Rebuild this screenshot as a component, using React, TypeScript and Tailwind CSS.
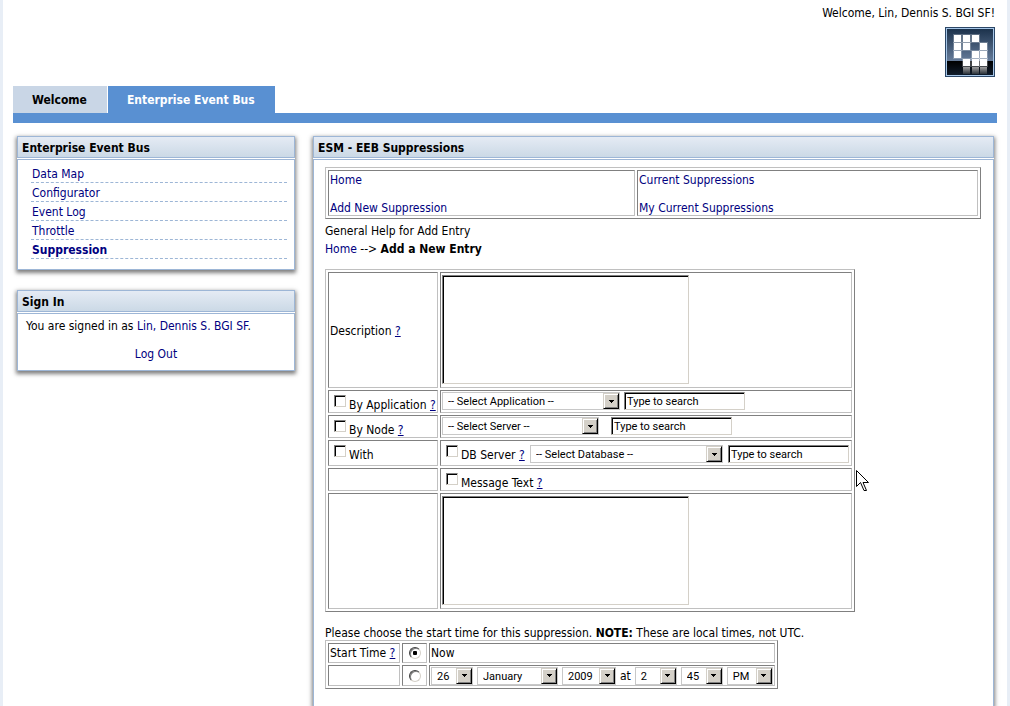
import type { ReactNode } from "react";

const SUNKEN =
  "border border-t-[#808080] border-l-[#808080] border-r-[#d4d0c8] border-b-[#d4d0c8] bg-white shadow-[inset_1px_1px_0_#000] outline-none";
const LINK = "text-[#000080]";
const TABLE =
  "border-separate border-spacing-[2px] border border-t-[#c0c0c0] border-l-[#c0c0c0] border-r-[#808080] border-b-[#808080]";
const EDGE = "border border-t-[#808080] border-l-[#808080] border-r-[#c0c0c0] border-b-[#c0c0c0]";
const CELL = `${EDGE} p-px`;
const TEXT_CELL = `${EDGE} px-px pt-0.5 pb-0`;

const SIDE_LINKS = ["Data Map", "Configurator", "Event Log", "Throttle", "Suppression"];
const MONTHS = [
  "January", "February", "March", "April", "May", "June",
  "July", "August", "September", "October", "November", "December",
];

function Panel({ title, className = "", bodyClass = "", children }: {
  title: string;
  className?: string;
  bodyClass?: string;
  children: ReactNode;
}) {
  return (
    <section className={`flex flex-col bg-white shadow-[0_2px_4px_1px_rgba(0,0,0,0.5)] ${className}`}>
      <h2 className="mb-px flex h-[22px] items-center border border-[#9db6d6] bg-linear-to-b from-[#e5ebf4] to-[#cbd9e6] px-1 pt-0.5 text-[12px] font-bold text-black">
        {title}
      </h2>
      <div className={`border border-[#9db6d6] ${bodyClass}`}>{children}</div>
    </section>
  );
}

function Select({ label, options, value, width }: {
  label: string;
  options: string[];
  value?: string;
  width: string;
}) {
  return (
    <span className={`relative inline-block h-[18px] shrink-0 ${width}`}>
      <select
        aria-label={label}
        defaultValue={value ?? options[0]}
        className="block h-full w-full appearance-none border border-[#c8c8c8] bg-white pt-px pl-[5px] font-[Roboto,sans-serif] text-[11px] leading-[15px] text-black outline-none"
      >
        {options.map((o) => (
          <option key={o}>{o}</option>
        ))}
      </select>
      <span className="pointer-events-none absolute inset-y-px right-px flex w-4 items-center justify-center border border-t-[#d4d0c8] border-l-[#d4d0c8] border-r-black border-b-black bg-[#d4d0c8] shadow-[inset_1px_1px_0_#fff,inset_-1px_-1px_0_#808080]">
        <svg width="5" height="3" viewBox="0 0 5 3" shapeRendering="crispEdges" aria-hidden="true">
          <path d="M0 0h5v1H0zM1 1h3v1H1zM2 2h1v1H2z" />
        </svg>
      </span>
    </span>
  );
}

function SearchInput({ label }: { label: string }) {
  return (
    <input
      type="text"
      aria-label={label}
      defaultValue="Type to search"
      className={`h-[18px] w-[121px] shrink-0 px-0.5 pt-px font-[Roboto,sans-serif] text-[11px] leading-[15px] text-black ${SUNKEN}`}
    />
  );
}

function Help() {
  return (
    <a href="#help" className="text-[#000080] underline">
      ?
    </a>
  );
}

function Check({ id, label, help = true }: { id: string; label: string; help?: boolean }) {
  return (
    <span className="flex items-start gap-[3px] pl-1 whitespace-nowrap">
      <input
        id={id}
        type="checkbox"
        className={`mt-[3px] h-3 w-3 shrink-0 appearance-none checked:bg-[#404040] ${SUNKEN}`}
      />
      <span className="mt-[6px] -mb-px">
        <label htmlFor={id}>{label}</label>
        {help && <> <Help /></>}
      </span>
    </span>
  );
}

function Radio({ label, checked }: { label: string; checked?: boolean }) {
  return (
    <input
      type="radio"
      name="start"
      aria-label={label}
      defaultChecked={checked}
      className="mx-auto block h-3 w-3 appearance-none rounded-full border border-t-[#404040] border-l-[#404040] border-r-[#d4d0c8] border-b-[#d4d0c8] bg-white shadow-[inset_1px_1px_0_#808080] outline-none checked:bg-[radial-gradient(circle,#000_2px,#fff_2.5px)]"
    />
  );
}

function Logo() {
  const xs = [9, 18, 27, 35];
  const ys = [8, 16, 24, 32];
  const rows = [[0, 1, 2], [0, 1, 3], [0, 2, 3], [1, 2, 3]];
  return (
    <svg width="50" height="50" viewBox="0 0 50 50" role="img" aria-label="Portal logo">
      <defs>
        <linearGradient id="sky" x1="0" y1="0" x2="0" y2="1">
          <stop offset="0" stopColor="#1c324c" />
          <stop offset="1" stopColor="#667c9a" />
        </linearGradient>
        <linearGradient id="floor" x1="0" y1="0" x2="0" y2="1">
          <stop offset="0" stopColor="#000" />
          <stop offset="1" stopColor="#101c2b" />
        </linearGradient>
        <linearGradient id="mirror" x1="0" y1="0" x2="0" y2="1">
          <stop offset="0" stopColor="#a0a0a0" />
          <stop offset="1" stopColor="#2c333b" />
        </linearGradient>
      </defs>
      <rect width="50" height="50" fill="#2c4767" />
      <rect x="1" y="1" width="48" height="48" fill="#a6c6e8" />
      <rect x="2" y="2" width="46" height="32" fill="url(#sky)" />
      <rect x="2" y="34" width="46" height="14" fill="url(#floor)" />
      {rows.map((cols, r) =>
        cols.map((c) => (
          <rect key={`${r}-${c}`} x={xs[c] - 1} y={ys[r] - 1} width="9" height="9" fill="#fff" opacity="0.25" />
        )),
      )}
      {rows.map((cols, r) =>
        cols.map((c) => (
          <rect key={`${r}-${c}`} x={xs[c]} y={ys[r]} width="7" height="7" fill="#fff" />
        )),
      )}
      {[1, 2, 3].map((c) => (
        <rect key={c} x={xs[c]} y="40" width="7" height="7" fill="url(#mirror)" />
      ))}
    </svg>
  );
}

export default function App() {
  return (
    <div className="relative flex min-h-screen flex-col border-x-[3px] border-[#e8eef6] bg-white px-[10px] font-['DejaVu_Sans_Condensed','DejaVu_Sans',sans-serif] text-[12px] leading-[14px] text-black">
      <header className="flex flex-col items-end gap-[7px] pt-[6px] pr-0.5">
        <p>Welcome, Lin, Dennis S. BGI SF!</p>
        <Logo />
      </header>

      <nav className="mt-[9px] flex gap-px border-b-[10px] border-[#5990d2] font-bold">
        <a href="#welcome" className="flex h-[27px] items-center bg-[#c9d6e6] pr-5 pl-[19px]">
          Welcome
        </a>
        <a href="#eeb" className="flex h-[27px] items-center bg-[#5990d2] pr-5 pl-[19px] text-white">
          Enterprise Event Bus
        </a>
      </nav>

      <div className="mt-[13px] mr-[3px] ml-1 grid flex-1 grid-cols-[278px_1fr] gap-[18px]">
        <aside className="flex flex-col gap-5">
          <Panel title="Enterprise Event Bus" bodyClass="pt-1 pr-[7px] pb-[10px] pl-[13px]">
            <ul>
              {SIDE_LINKS.map((name) => (
                <li key={name} className="flex h-[19px] items-center border-b border-dashed border-[#9db6d6] pt-0.5 pl-px">
                  <a href="#nav" className={`${LINK} ${name === "Suppression" ? "font-bold" : ""}`}>
                    {name}
                  </a>
                </li>
              ))}
            </ul>
          </Panel>
          <Panel title="Sign In" bodyClass="px-2 pt-[5px] pb-[9px]">
            <p>
              You are signed in as <a href="#user" className={LINK}>Lin, Dennis S. BGI SF</a>.
            </p>
            <p className="mt-[14px] text-center">
              <a href="#logout" className={LINK}>Log Out</a>
            </p>
          </Panel>
        </aside>

        <Panel title="ESM - EEB Suppressions" bodyClass="flex-1 border-b-0 pt-[7px] pr-3 pl-[11px]">
          <table className={`w-full ${TABLE}`}>
            <tbody>
              <tr>
                <td className={`w-[307px] ${TEXT_CELL}`}>
                  <a href="#home" className={`block ${LINK}`}>Home</a>
                  <a href="#add" className={`mt-[14px] block ${LINK}`}>Add New Suppression</a>
                </td>
                <td className={TEXT_CELL}>
                  <a href="#current" className={`block ${LINK}`}>Current Suppressions</a>
                  <a href="#mine" className={`mt-[14px] block ${LINK}`}>My Current Suppressions</a>
                </td>
              </tr>
            </tbody>
          </table>

          <div className="pt-[3px] leading-[18px]">
            <p>General Help for Add Entry</p>
            <p>
              <a href="#home" className={LINK}>Home</a> --&gt; <b>Add a New Entry</b>
            </p>
          </div>

          <form>
            <table className={`mt-[11px] ${TABLE}`}>
              <tbody>
                <tr className="h-[116px]">
                  <td className={`w-[110px] ${TEXT_CELL}`}>
                    <label htmlFor="description">Description</label> <Help />
                  </td>
                  <td className={`w-[412px] align-top ${CELL}`}>
                    <textarea id="description" className={`mt-px block h-[109px] w-[247px] resize-none ${SUNKEN}`} />
                  </td>
                </tr>
                <tr className="h-[23px]">
                  <td className={`align-top ${CELL}`}>
                    <Check id="by-app" label="By Application" />
                  </td>
                  <td className={`align-top ${CELL}`}>
                    <div className="flex gap-1">
                      <Select label="Application" options={["-- Select Application --"]} width="w-[178px]" />
                      <SearchInput label="Search applications" />
                    </div>
                  </td>
                </tr>
                <tr className="h-[23px]">
                  <td className={`align-top ${CELL}`}>
                    <Check id="by-node" label="By Node" />
                  </td>
                  <td className={`align-top ${CELL}`}>
                    <div className="flex gap-3">
                      <Select label="Server" options={["-- Select Server --"]} width="w-[157px]" />
                      <SearchInput label="Search servers" />
                    </div>
                  </td>
                </tr>
                <tr className="h-[26px]">
                  <td className={`align-top ${CELL}`}>
                    <Check id="with" label="With" help={false} />
                  </td>
                  <td className={`align-top ${CELL}`}>
                    <div className="flex justify-between">
                      <Check id="db-server" label="DB Server" />
                      <div className="flex gap-[5px] pt-[3px] pr-px">
                        <Select label="Database" options={["-- Select Database --"]} width="w-[193px]" />
                        <SearchInput label="Search databases" />
                      </div>
                    </div>
                  </td>
                </tr>
                <tr className="h-[23px]">
                  <td className={CELL} />
                  <td className={`align-top ${CELL}`}>
                    <Check id="message" label="Message Text" />
                  </td>
                </tr>
                <tr className="h-[116px]">
                  <td className={CELL} />
                  <td className={`align-top ${CELL}`}>
                    <textarea aria-label="Message Text" className={`mt-px block h-[109px] w-[247px] resize-none ${SUNKEN}`} />
                  </td>
                </tr>
              </tbody>
            </table>

            <p className="mt-[14px]">
              Please choose the start time for this suppression. <b>NOTE:</b> These are local times, not UTC.
            </p>
            <table className={TABLE}>
              <tbody>
                <tr className="h-5">
                  <td className={`w-[72px] whitespace-nowrap ${CELL}`}>
                    Start Time <Help />
                  </td>
                  <td className={`w-[25px] ${CELL}`}>
                    <Radio label="Now" checked />
                  </td>
                  <td className={`w-[346px] ${CELL}`}>Now</td>
                </tr>
                <tr className="h-[21px]">
                  <td className={CELL} />
                  <td className={CELL}>
                    <Radio label="At a chosen time" />
                  </td>
                  <td className={`${EDGE} px-px py-0`}>
                    <div className="flex items-center gap-1">
                      <Select label="Day" options={["25", "26", "27"]} value="26" width="w-[42px]" />
                      <Select label="Month" options={MONTHS} width="w-[81px]" />
                      <Select label="Year" options={["2009", "2010"]} width="w-[54px]" />
                      <span>at</span>
                      <Select label="Hour" options={["1", "2", "3"]} value="2" width="w-[42px]" />
                      <Select label="Minute" options={["00", "15", "30", "45"]} value="45" width="w-[42px]" />
                      <Select label="AM or PM" options={["AM", "PM"]} value="PM" width="w-[46px]" />
                    </div>
                  </td>
                </tr>
              </tbody>
            </table>
          </form>
        </Panel>
      </div>

      <svg
        className="pointer-events-none absolute top-[470px] left-[853px]"
        width="13"
        height="22"
        viewBox="0 0 13 22"
        aria-hidden="true"
      >
        <path
          d="M0.5 0.5V16.5L4.5 12.5L8 20.5H10.5L7 12.5H12.5Z"
          fill="#fff"
          stroke="#000"
        />
      </svg>
    </div>
  );
}
